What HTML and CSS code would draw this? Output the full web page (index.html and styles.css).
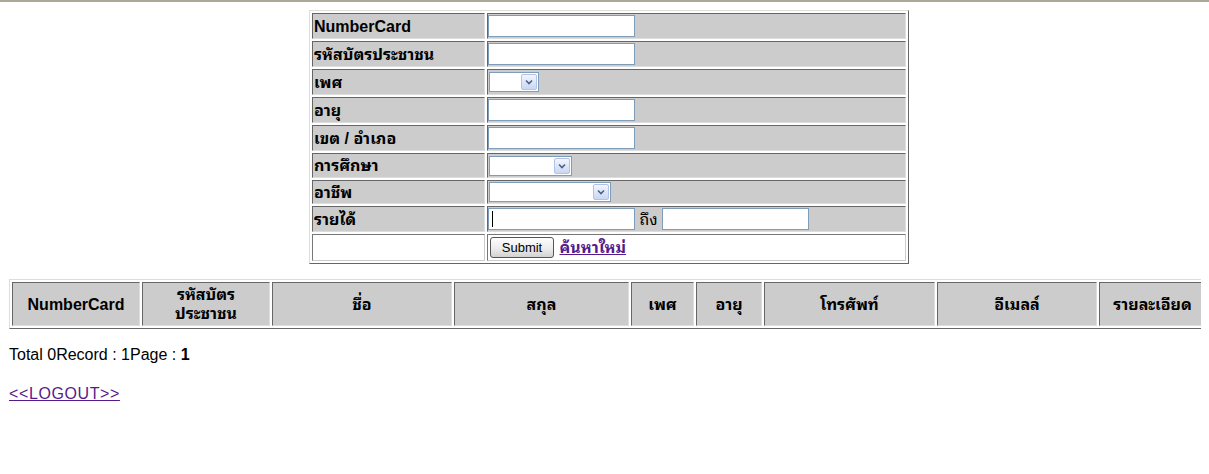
FILE: index.html
```html
<!DOCTYPE html>
<html>
<head>
<meta charset="utf-8">
<title>ค้นหาข้อมูลสมาชิก</title>
<link rel="stylesheet" href="styles.css">
</head>

<body>

<div id="search_box">
    <form action="#" method="post">
    <table class="search">
        <tr>
            <td class="label">NumberCard</td>
            <td class="field"><input type="text" class="txt"></td>
        </tr>
        <tr>
            <td class="label">รหัสบัตรประชาชน</td>
            <td class="field"><input type="text" class="txt"></td>
        </tr>
        <tr>
            <td class="label">เพศ</td>
            <td class="field"><span class="sel sel_sex"><span class="sel_btn"><svg width="10" height="8" viewBox="0 0 10 8"><path d="M2 2.5 L5 5.5 L8 2.5" fill="none" stroke="#4d6185" stroke-width="1.6"/></svg></span></span></td>
        </tr>
        <tr>
            <td class="label">อายุ</td>
            <td class="field"><input type="text" class="txt"></td>
        </tr>
        <tr>
            <td class="label">เขต / อำเภอ</td>
            <td class="field"><input type="text" class="txt"></td>
        </tr>
        <tr class="short">
            <td class="label">การศึกษา</td>
            <td class="field"><span class="sel sel_edu"><span class="sel_btn"><svg width="10" height="8" viewBox="0 0 10 8"><path d="M2 2.5 L5 5.5 L8 2.5" fill="none" stroke="#4d6185" stroke-width="1.6"/></svg></span></span></td>
        </tr>
        <tr class="shorter">
            <td class="label">อาชีพ</td>
            <td class="field"><span class="sel sel_job"><span class="sel_btn"><svg width="10" height="8" viewBox="0 0 10 8"><path d="M2 2.5 L5 5.5 L8 2.5" fill="none" stroke="#4d6185" stroke-width="1.6"/></svg></span></span></td>
        </tr>
        <tr>
            <td class="label">รายได้</td>
            <td class="field"><input type="text" class="txt focus"> <span class="to">ถึง</span> <input type="text" class="txt"></td>
        </tr>
        <tr class="last">
            <td class="label"></td>
            <td class="field"><input type="submit" class="btn" value="Submit"> <a href="#" class="new_search">ค้นหาใหม่</a></td>
        </tr>
    </table>
    </form>
</div>

<table class="result">
    <tr>
        <th class="c_card">NumberCard</th>
        <th class="c_id">รหัสบัตร<br>ประชาชน</th>
        <th class="c_name">ชื่อ</th>
        <th class="c_last">สกุล</th>
        <th class="c_sex">เพศ</th>
        <th class="c_age">อายุ</th>
        <th class="c_tel">โทรศัพท์</th>
        <th class="c_mail">อีเมลล์</th>
        <th class="c_detail">รายละเอียด</th>
    </tr>
</table>

<p class="total">Total 0Record : 1Page : <b>1</b></p>

<p class="bottom"><a href="#" class="logout">&lt;&lt;LOGOUT&gt;&gt;</a></p>

</body>
</html>
```

FILE: styles.css
```css
html {
    border-top: 2px solid #aca899;
}
body {
    margin: 8px;
    color: #000;
    background: #fff;
    font: 16px/19px Tahoma, "Liberation Sans", "Noto Sans Thai Looped", Loma, Garuda, "Noto Sans Thai", sans-serif;
}
p {
    margin: 16px 0 0 1px;
}
a {
    color: #551a8b;
}

/* search form */
#search_box {
    display: flex;
    justify-content: center;
    padding-left: 9px;
}
form {
    margin: 0;
}
.search {
    width: 600px;
    border-collapse: separate;
    border-spacing: 2px;
    border: 1px solid;
    border-color: #ddd #666 #666 #ddd;
}
.search tr {
    height: 26px;
}
.search tr.short {
    height: 25px;
}
.search tr.shorter {
    height: 24px;
}
.search tr.last {
    height: 27px;
}
.search td {
    padding: 0 1px;
    background: #ccc;
    border: 1px solid;
    border-color: #666 #ddd #ddd #666;
    font-size: 16px;
    white-space: nowrap;
}
.search td.label {
    width: 169px;
    font-weight: bold;
}
.search td.field {
    padding: 0;
}
.search tr.last td {
    background: #fff;
    border-color: #777 #ccc #ccc #777;
}
.txt {
    box-sizing: border-box;
    width: 147px;
    height: 22px;
    margin: 0;
    padding: 1px 3px;
    border: 1px solid #7f9db9;
    background: #fff;
    vertical-align: middle;
    font: 13px "Liberation Sans", sans-serif;
}
.focus {
    background: linear-gradient(#000, #000) 3px 2px / 1px 16px no-repeat #fff;
}
.to {
    display: inline-block;
    margin: 0;
    vertical-align: middle;
}
.sel {
    box-sizing: border-box;
    display: inline-flex;
    justify-content: flex-end;
    align-items: center;
    height: 20px;
    margin-left: 1px;
    padding: 1px;
    border: 1px solid #7f9db9;
    background: #fff;
    vertical-align: middle;
}
.sel_sex {
    width: 50px;
}
.sel_edu {
    width: 83px;
}
.sel_job {
    width: 122px;
}
.sel_btn {
    box-sizing: border-box;
    display: flex;
    align-items: center;
    justify-content: center;
    width: 16px;
    height: 16px;
    border: 1px solid #b3c3e6;
    border-radius: 2px;
    background: linear-gradient(#f3f6fd, #c9d6f5);
}
.btn {
    box-sizing: border-box;
    width: 64px;
    height: 21px;
    margin: 0 0 0 2px;
    padding: 0;
    border: 1px solid #555;
    border-radius: 3px;
    background: linear-gradient(#fdfdfd, #ececec 55%, #d2d2d2);
    color: #000;
    font: 13px "Liberation Sans", sans-serif;
    vertical-align: middle;
}
.new_search {
    margin-left: 1px;
    font-weight: bold;
    vertical-align: middle;
}

/* result header */
.result {
    table-layout: fixed;
    width: 1200px;
    margin: 15px 0 0 1px;
    border-collapse: separate;
    border-spacing: 2px;
    border: 1px solid;
    border-color: #ddd #666 #666 #ddd;
}
.result tr {
    height: 44px;
}
.result th {
    box-sizing: border-box;
    padding: 1px;
    background: #ccc;
    border: 1px solid;
    border-color: #666 #ddd #ddd #666;
    font-size: 16px;
    line-height: 19px;
    text-align: center;
}
.c_card { width: 128px; }
.c_id { width: 128px; }
.c_name { width: 180px; }
.c_last { width: 175px; }
.c_sex { width: 63px; }
.c_age { width: 66px; }
.c_tel { width: 171px; }
.c_mail { width: 160px; }
.c_detail { width: 107px; }

.total {
    margin-top: 16px;
}
.bottom {
    margin-top: 20px;
}
.logout {
    letter-spacing: 0.6px;
}
```
